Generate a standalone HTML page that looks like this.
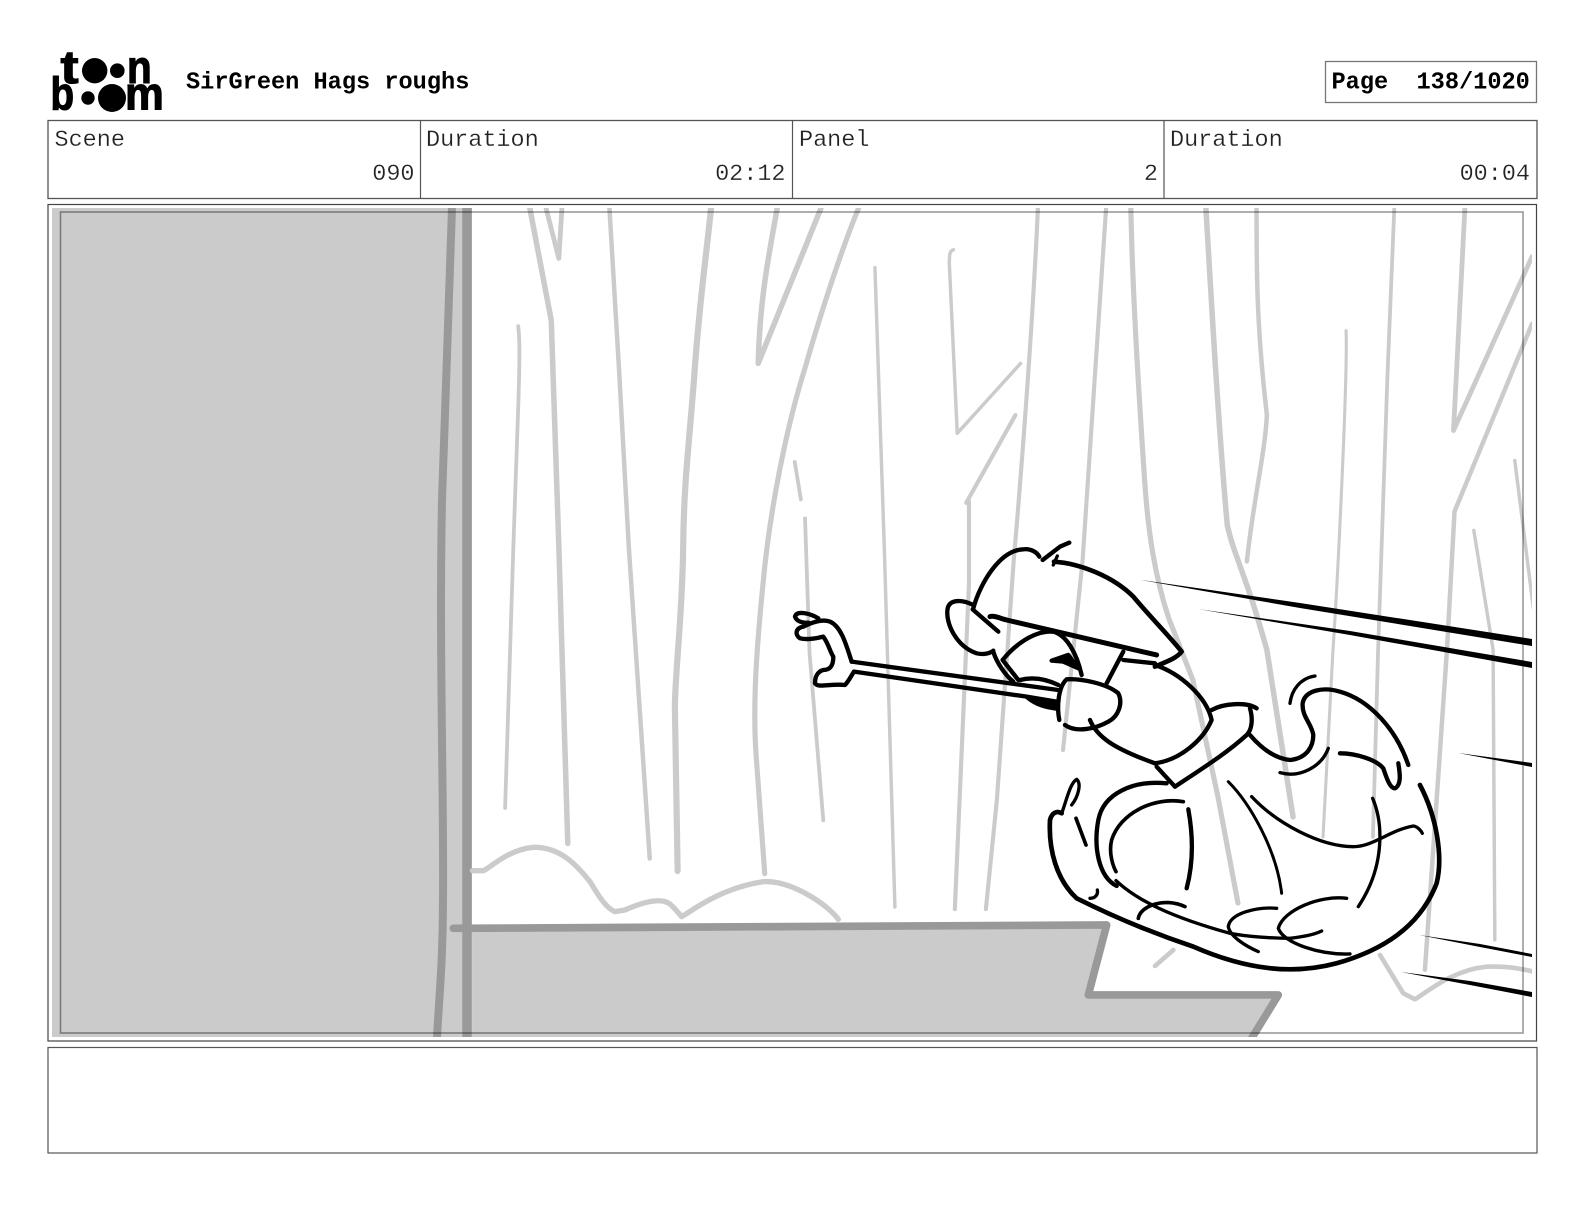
<!DOCTYPE html>
<html><head><meta charset="utf-8"><title>SirGreen Hags roughs</title>
<style>
html,body{margin:0;padding:0;background:#fff;width:1584px;height:1224px;overflow:hidden}
svg{display:block}
text{font-family:"Liberation Mono",monospace;font-size:23.47px;white-space:pre;fill:#222;stroke:#fff;stroke-width:.22px}
text.b{font-weight:bold;fill:#000;stroke:none;font-size:23.62px}
text.logo{font-family:"Liberation Sans",sans-serif;font-weight:bold;font-size:46px;fill:#000;stroke:#000;stroke-width:1.1px}
.g{fill:none;stroke:#cbcbcb;stroke-linecap:round;stroke-linejoin:round}
.k{fill:none;stroke:#000;stroke-linecap:round;stroke-linejoin:round;stroke-width:13}
</style></head><body>
<svg width="1584" height="1224" viewBox="0 0 1584 1224" xmlns="http://www.w3.org/2000/svg">
<defs><clipPath id="c"><rect x="52" y="208" width="1480" height="829"/></clipPath></defs>

<!-- logo -->
<g>
<text class="logo" transform="translate(60.5,83) scale(1.18,1)">t</text>
<circle cx="94.7" cy="70.7" r="12.7" fill="#000"/><circle cx="117.3" cy="70.7" r="7.3" fill="#000"/>
<text class="logo" transform="translate(127,83) scale(.88,1)">n</text>
<text class="logo" transform="translate(50.5,109.5) scale(.84,1)">b</text>
<circle cx="88" cy="98" r="6.7" fill="#000"/><circle cx="112" cy="98" r="14" fill="#000"/>
<text class="logo" transform="translate(125,109.5) scale(.95,1)">m</text>
</g>
<text class="b" x="186" y="88.5">SirGreen Hags roughs</text>
<rect x="1325.5" y="61.5" width="211" height="41" fill="none" stroke="#777" stroke-width="1.3"/>
<text class="b" x="1331.5" y="88.5">Page  138/1020</text>

<!-- table -->
<rect x="48" y="120.5" width="1489" height="78" fill="none" stroke="#555" stroke-width="1.3"/>
<path d="M420.5 120.5V198.5M792.5 120.5V198.5M1164 120.5V198.5" stroke="#555" stroke-width="1.2" fill="none"/>
<text x="54.5" y="146">Scene</text><text x="426" y="146">Duration</text><text x="799" y="146">Panel</text><text x="1170" y="146">Duration</text>
<text x="414.5" y="180" text-anchor="end">090</text><text x="785.5" y="180" text-anchor="end">02:12</text><text x="1158" y="180" text-anchor="end">2</text><text x="1530" y="180" text-anchor="end">00:04</text>

<!-- art -->
<rect x="48" y="204.5" width="1488.5" height="836.5" fill="#fff" stroke="#444" stroke-width="1.2"/>
<g clip-path="url(#c)">
<rect x="52" y="208" width="420" height="829" fill="#cbcbcb"/>
<!-- floor -->
<g transform="translate(1020,650) scale(.3333)">
<path d="M-1644,830L265,825L205,1035L775,1035L690,1165L-1644,1165Z" fill="#cbcbcb"/>
<path d="M-1700,835L260,825L205,1035L775,1035L695,1165" fill="none" stroke="#999" stroke-width="23" stroke-linejoin="round" stroke-linecap="round"/>
</g>
<path d="M452,208C449,320 445,400 442,500C439,650 444,800 443,900C443,960 439,1000 437,1037" fill="none" stroke="#999" stroke-width="8"/>
<path d="M467,208V1037" fill="none" stroke="#999" stroke-width="9.5"/>

<!-- trees left -->
<g transform="translate(460,205) scale(.34435)" class="g" stroke-width="14">
<path d="M203,10L265,335L287,990L313,1854" stroke-width="16"/>
<path d="M250,10L287,155L296,10" stroke-width="14"/>
<path d="M169,352C175,400 172,480 170,560L155,990L131,1751" stroke-width="11"/>
<path d="M434,10L462,480L490,990L551,1898" stroke-width="13"/>
<path d="M729,10C715,150 695,280 680,500C665,700 650,800 648,1000C645,1200 625,1350 624,1458L632,1934" stroke-width="18"/>
<path d="M921,10C900,130 870,270 866,460L1048,10" stroke-width="16"/>
<path d="M1157,10C1100,150 1040,340 1000,480C950,640 900,880 880,1100C860,1300 850,1458 860,1600L885,1942" stroke-width="15"/>
<path d="M972,746L990,855" stroke-width="11"/>
<path d="M1002,910L1015,1300L1055,1787" stroke-width="11"/>
<path d="M1205,182L1232,990L1263,2039" stroke-width="10"/>
<path d="M1433,130C1422,132 1421,145 1421,170L1444,663L1628,460" stroke-width="10"/>
<path d="M1613,610L1470,865L1478,860L1478,1100L1437,2045" stroke-width="12"/>
</g>
<!-- trees right -->
<g transform="translate(1000,205) scale(.34435)" class="g" stroke-width="14">
<path d="M110,10C95,350 60,800 40,1030L-9,1727L-41,2045" stroke-width="12"/>
<path d="M308,10L240,1030L183,1583" stroke-width="12"/>
<path d="M380,10C385,250 400,500 420,800C430,950 450,1080 490,1200L560,1379L633,1719L691,2027" stroke-width="15"/>
<path d="M598,10C615,300 635,650 660,930C680,1020 715,1075 775,1292L851,1777" stroke-width="16"/>
<path d="M745,10C745,200 745,350 775,610C770,720 735,860 717,1035" stroke-width="13"/>
<path d="M1005,365C1010,500 980,1100 967,1292L938,1835" stroke-width="9"/>
<path d="M1145,10L1125,500L1098,1292L1083,1835" stroke-width="11"/>
<path d="M1350,10L1317,655L1545,150" stroke-width="14"/>
<path d="M1545,345L1320,890L1298,1292L1234,2221" stroke-width="13"/>
<path d="M1376,945L1432,1292L1437,2134" stroke-width="10"/>
<path d="M1495,742L1550,1180" stroke-width="10"/>
</g>
<!-- hills -->
<g transform="translate(420,800) scale(.3333)" class="g" stroke-width="16">
<path d="M157,212L190,212C210,205 260,150 340,142C420,140 470,195 510,245C540,295 560,325 585,335L615,330C660,310 720,290 750,312C770,330 780,345 785,350C820,330 900,265 1030,245C1110,240 1220,310 1255,358"/>
</g>
<g transform="translate(1020,650) scale(.3333)" class="g" stroke-width="14">
<path d="M405,948L460,900"/>
<path d="M1080,915L1150,1030L1185,1048C1230,1020 1300,960 1400,950C1460,948 1500,955 1540,965"/>
</g>

<!-- character upper -->
<g transform="translate(780,520) scale(.3333)" class="k">
<path d="M215,425C200,380 185,320 150,305C125,295 90,310 70,320C45,325 45,345 60,355C80,360 110,355 130,350C145,370 150,395 160,410C160,430 155,450 130,450C110,455 105,475 105,490C115,505 150,490 195,495C205,485 215,465 222,455"/>
<path d="M115,295C90,280 50,270 45,290C50,305 70,310 85,308"/>
<path d="M215,425L835,510" />
<path d="M222,455L740,530L830,545"/>
<path d="M740,535C770,560 800,565 832,570L830,545Z" fill="#000" stroke-width="6"/>
<path d="M580,265C600,190 660,90 730,88C750,85 770,95 778,110"/>
<path d="M788,120L840,80L868,68"/>
<path d="M820,135L832,108" stroke-width="10"/>
<path d="M822,125C900,130 1000,170 1060,230C1110,290 1170,350 1205,395C1190,415 1160,425 1125,440" stroke-width="14"/>
<path d="M630,290C640,285 660,295 680,300L1130,405" stroke-width="15"/>
<path d="M578,268L655,335"/>
<path d="M580,255C550,240 510,235 503,265C495,310 530,380 590,400C610,405 630,400 640,392"/>
<path d="M640,395C650,430 680,470 700,485"/>
<path d="M668,420C700,380 760,330 820,335C860,345 890,400 905,465"/>
<path d="M668,420L715,480"/>
<path d="M815,422L865,405L895,445L850,425Z" fill="#000"/>
<path d="M720,480C760,470 800,478 835,495"/>
<path d="M1030,395L980,490"/>
<path d="M1030,420L1125,430"/>
<path d="M838,600C830,560 835,500 860,478C900,475 980,490 1015,520C1030,550 1015,590 985,605C950,625 890,640 855,615"/>
<path d="M930,600C950,650 1000,685 1125,730C1200,720 1270,660 1295,600C1280,530 1200,460 1125,435"/>
</g>

<!-- character lower -->
<g transform="translate(1020,650) scale(.3333)" class="k">
<path d="M575,180C610,160 680,155 710,175"/>
<path d="M690,175C700,210 695,240 680,255C620,310 540,360 465,410L410,350"/>
<path d="M690,255C720,290 760,325 810,330C860,325 880,290 880,255C875,220 845,200 848,160C855,120 910,110 960,125C1050,150 1130,240 1165,345"/>
<path d="M810,160C815,120 840,85 885,78" stroke-width="10"/>
<path d="M780,368C840,385 905,350 925,295" stroke-width="10"/>
<path d="M960,310C1010,310 1070,330 1090,355C1100,385 1110,415 1125,415C1145,405 1140,370 1135,340"/>
<path d="M1200,405C1250,500 1270,620 1250,700C1200,830 1090,900 950,940C820,975 680,960 520,890C400,850 280,800 170,745C110,690 85,600 90,510C95,490 110,480 125,490" stroke-width="14"/>
<path d="M125,490C140,450 150,400 170,388C185,400 175,440 155,465" stroke-width="10"/>
<path d="M168,505L198,585" stroke-width="11"/>
<path d="M440,400C340,390 250,430 235,510C220,590 235,680 290,708"/>
<path d="M490,455C400,440 300,490 275,570C265,610 280,650 288,665" stroke-width="11"/>
<path d="M505,478C520,560 520,640 500,715"/>
<path d="M288,692C350,750 450,800 630,850C680,860 760,865 810,865C850,860 880,855 905,843" stroke-width="10"/>
<path d="M355,805C360,770 430,740 495,770" stroke-width="11"/>
<path d="M625,395C690,460 770,600 785,730" stroke-width="9"/>
<path d="M695,440C770,520 900,590 1000,590C1060,590 1110,540 1180,528C1195,530 1205,545 1207,550" stroke-width="10"/>
<path d="M1058,445C1090,520 1095,650 1015,770" stroke-width="10"/>
<path d="M770,775C710,770 630,790 625,830C630,860 680,890 715,905" stroke-width="10"/>
<path d="M980,745C900,735 790,780 775,835C790,880 900,915 990,912" stroke-width="10"/>
<path d="M210,745C225,745 235,735 232,720" stroke-width="10"/>
</g>

<!-- speed lines -->
<g fill="#000">
<polygon points="1141,580 1300,603 1532,639 1532,646 1300,608"/>
<polygon points="1198,609 1350,631 1532,662 1532,668 1350,635"/>
<polygon points="1458,753 1532,763 1532,767"/>
<polygon points="1419,935 1480,944 1532,954 1532,957 1480,947"/>
<polygon points="1401,972 1470,981 1532,992 1532,997 1470,985"/>
</g>
</g>

<!-- inner frame -->
<rect x="60.5" y="212" width="1462.5" height="821" fill="none" stroke="#000" stroke-opacity=".4" stroke-width="1.6"/>

<!-- caption box -->
<rect x="48" y="1047.5" width="1489" height="105.5" fill="#fff" stroke="#555" stroke-width="1.2"/>
</svg>
</body></html>
